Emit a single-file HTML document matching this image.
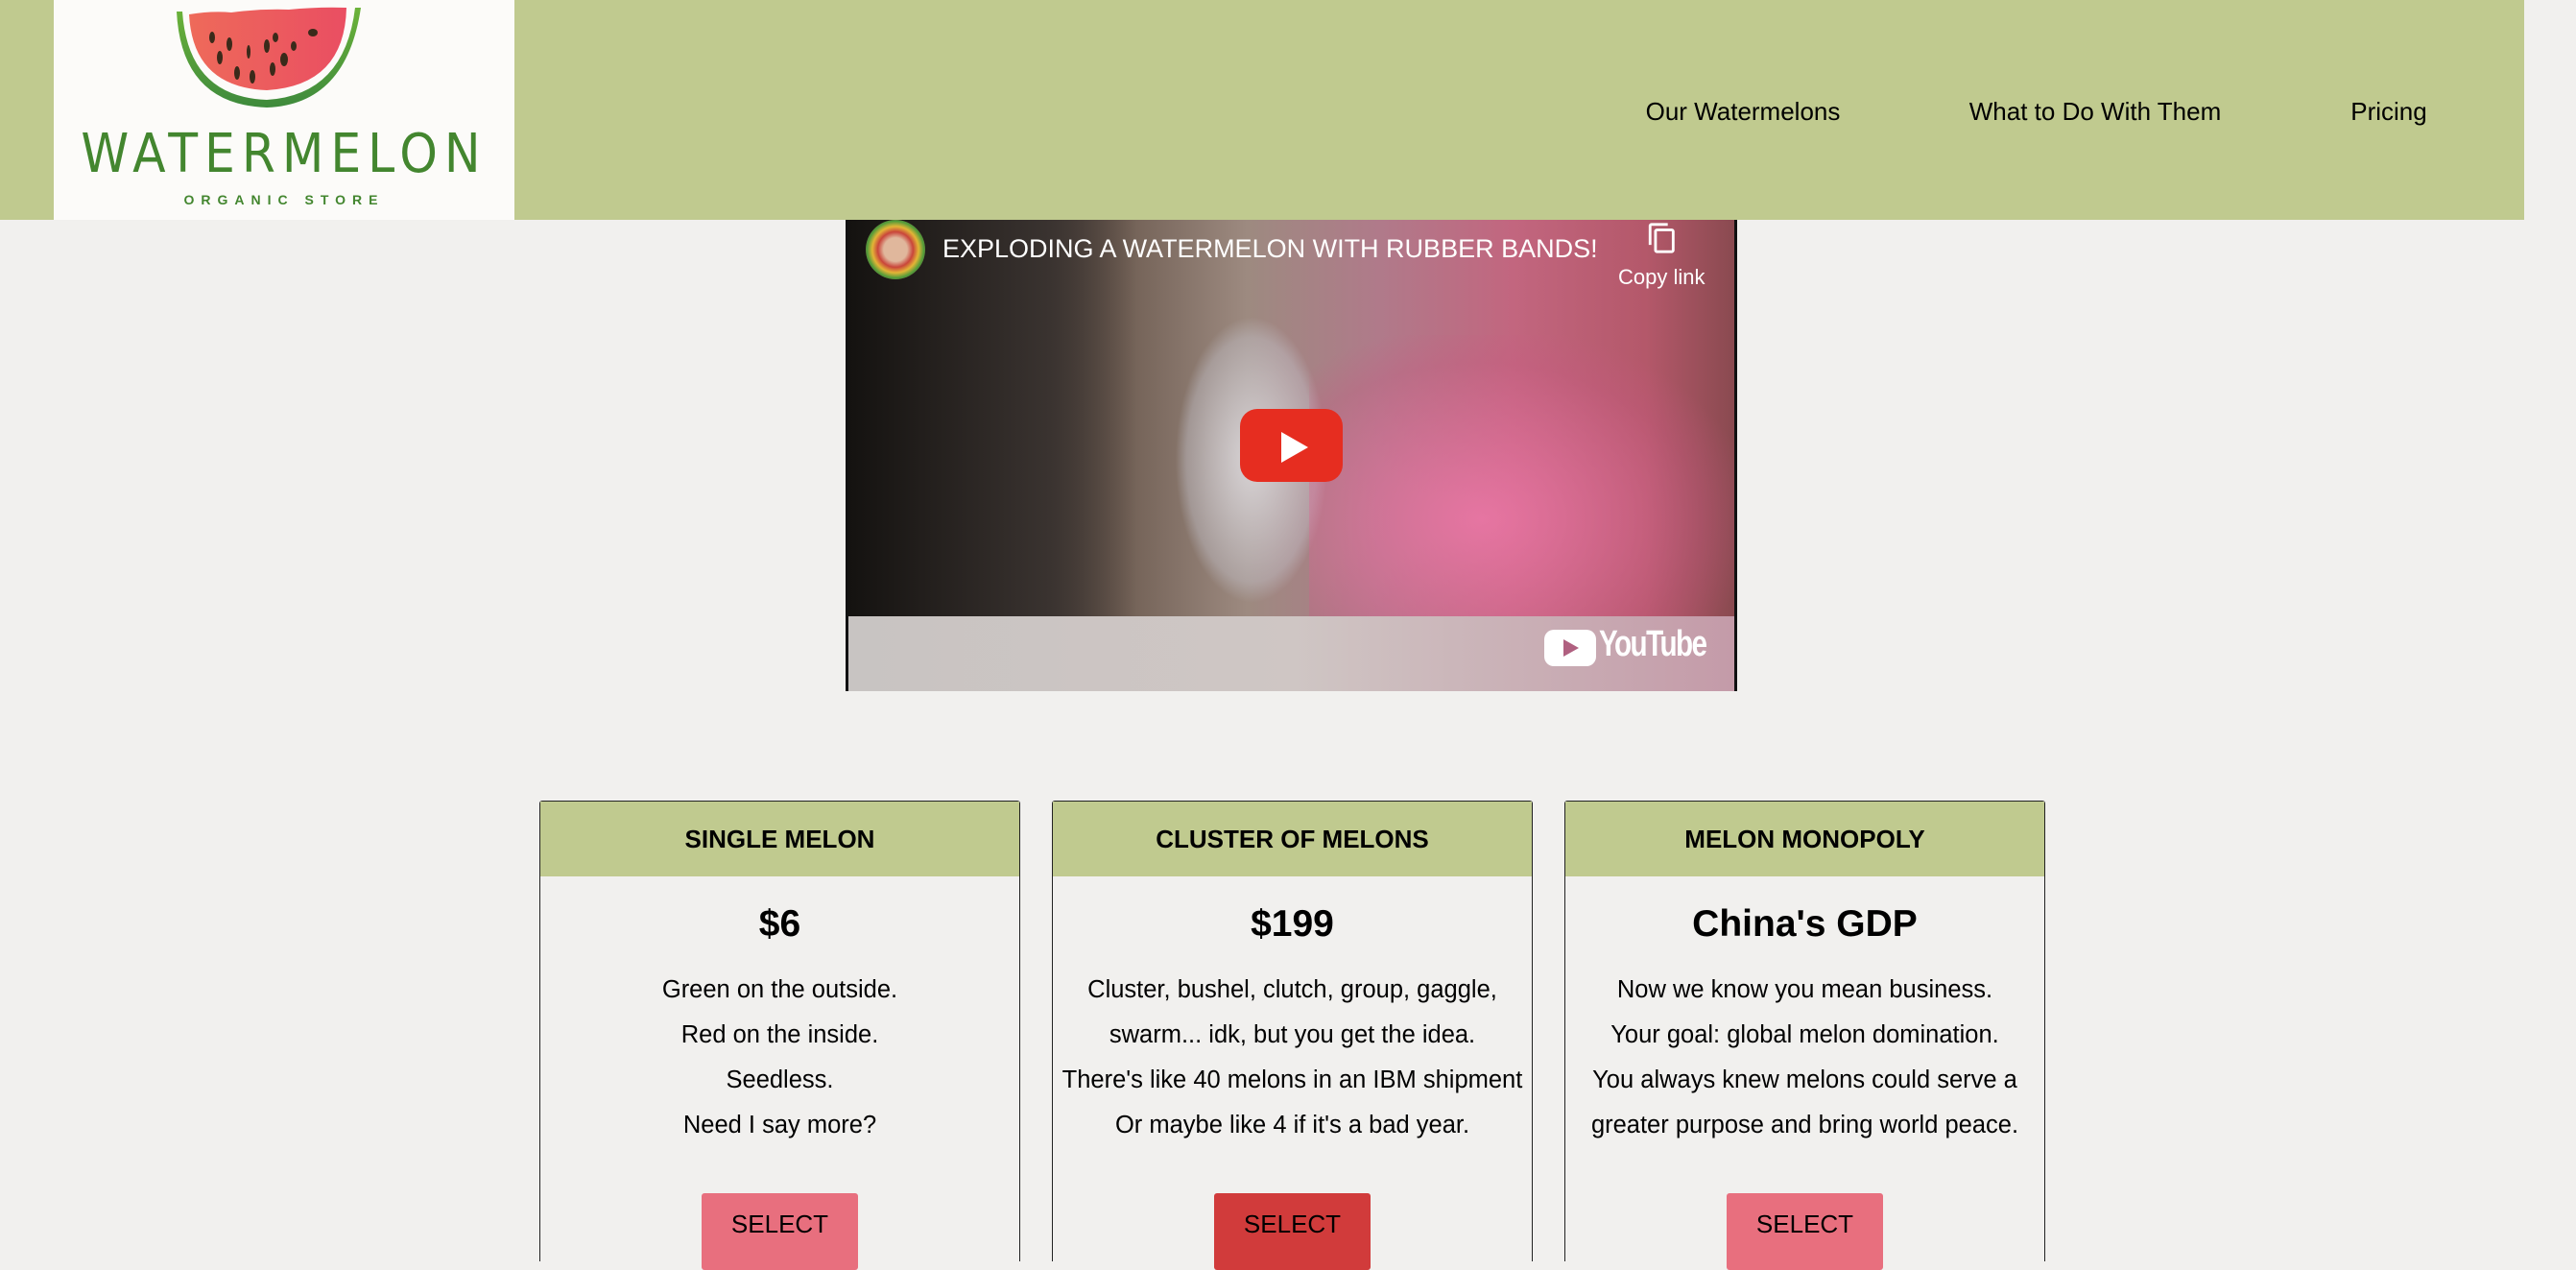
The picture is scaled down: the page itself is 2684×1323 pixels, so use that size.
<!DOCTYPE html>
<html><head><meta charset="utf-8"><style>
*{margin:0;padding:0;box-sizing:border-box}
body{width:2684px;height:1302px;background:#f1f0ee;position:relative;overflow:hidden;font-family:"Liberation Sans",sans-serif;color:#000}
.hdr{position:absolute;left:0;top:0;width:2630px;height:229px;background:#c0ca8f}
.logo{position:absolute;left:56px;top:0;width:480px;height:229px;background:#fcfbf9}
.wm{position:absolute;left:0;width:480px;text-align:center;color:#43862f;white-space:nowrap}
.nav{position:absolute;top:101px;font-size:26px;transform:translateX(-50%);white-space:nowrap}
.video{position:absolute;left:881px;top:229px;width:929px;height:491px;overflow:hidden;
background:linear-gradient(90deg,#1c1816 0%,#3a312d 15%,#6e5d52 30%,#9d8a80 45%,#b07a8a 60%,#c2667f 75%,#b4586a 90%,#8a4a50 100%);border-left:3px solid #111;border-right:3px solid #111}
.card{position:absolute;top:834px;width:501px;height:480px;border:1.5px solid #222;border-bottom:none;border-radius:3px 3px 0 0;text-align:center}
.card .h{height:78px;background:#c0ca8f;font-weight:bold;font-size:26px;line-height:78px}
.card .p{font-weight:bold;font-size:39px;margin-top:22px;height:56px;line-height:56px}
.card .d{font-size:25.5px;line-height:47px;margin-top:17px;white-space:nowrap}
.btn{position:absolute;left:168px;top:408px;width:163px;height:80px;border-radius:3px;font-size:26px;line-height:64px}
</style></head><body>
<div class="hdr">
 <div class="logo">
  <svg style="position:absolute;left:125px;top:4px" width="210" height="112" viewBox="0 0 210 112">
   <defs><linearGradient id="r" x1="0" x2="1"><stop offset="0" stop-color="#ee6a5a"/><stop offset="1" stop-color="#ea4e62"/></linearGradient>
   <linearGradient id="g" x1="0" x2="0" y1="0" y2="1"><stop offset="0" stop-color="#6cb33a"/><stop offset="1" stop-color="#3e8a3c"/></linearGradient></defs>
   <path d="M3 8 Q8 105 97 108 Q180 105 195 4 L189 4 Q178 95 97 100 Q15 97 9 8Z" fill="url(#g)"/>
   <path d="M16 11 Q40 7 60 9 Q90 5 120 6 Q150 3 180 4 Q178 85 97 90 Q20 87 16 11Z" fill="url(#r)"/>
   <g fill="#3a2a1a"><ellipse cx="40" cy="35" rx="3" ry="6"/><ellipse cx="58" cy="42" rx="3" ry="7"/><ellipse cx="48" cy="56" rx="3" ry="7"/><ellipse cx="78" cy="50" rx="2" ry="7"/><ellipse cx="97" cy="44" rx="3" ry="7"/><ellipse cx="106" cy="35" rx="3" ry="5"/><ellipse cx="115" cy="58" rx="4" ry="7"/><ellipse cx="125" cy="44" rx="3" ry="5"/><ellipse cx="145" cy="30" rx="5" ry="4"/><ellipse cx="66" cy="72" rx="3" ry="7"/><ellipse cx="82" cy="76" rx="3" ry="7"/><ellipse cx="103" cy="68" rx="3" ry="7"/></g>
  </svg>
  <div class="wm" style="top:128px;font-size:56px;letter-spacing:7px;font-family:'DejaVu Sans Condensed','Liberation Sans',sans-serif">WATERMELON</div>
  <div class="wm" style="top:200px;font-size:14px;letter-spacing:7px;font-weight:bold">ORGANIC STORE</div>
 </div>
 <div class="nav" style="left:1816px">Our Watermelons</div>
 <div class="nav" style="left:2183px">What to Do With Them</div>
 <div class="nav" style="left:2489px">Pricing</div>
</div>

<div class="video">
 <div style="position:absolute;left:0;top:0;width:300px;height:491px;background:linear-gradient(90deg,#141210,#3a3330 70%,transparent)"></div>
 <div style="position:absolute;left:340px;top:100px;width:160px;height:300px;background:radial-gradient(ellipse,#d8d4d6 0%,rgba(200,200,210,0.4) 60%,transparent 70%)"></div>
 <div style="position:absolute;left:480px;top:120px;width:449px;height:320px;background:radial-gradient(ellipse at 40% 60%,rgba(240,120,170,0.8),rgba(200,90,130,0.3) 60%,transparent 75%)"></div>
 <div style="position:absolute;left:0;top:413px;width:929px;height:78px;background:linear-gradient(90deg,#c8c4c2,#cfc6c4 50%,#c49aa8)"></div>
 <div style="position:absolute;left:18px;top:0;width:62px;height:62px;border-radius:50%;background:radial-gradient(circle,#e0b79c 28%,#c9453a 42%,#e3b536 55%,#4a9a3a 68%,#c9453a 80%)"></div>
 <div style="position:absolute;left:98px;top:15px;color:#fff;font-size:27px;white-space:nowrap">EXPLODING A WATERMELON WITH RUBBER BANDS!</div>
 <svg style="position:absolute;left:831px;top:2px" width="34" height="34" viewBox="0 0 24 24"><path d="M16 1H4c-1 0-2 1-2 2v14h2V3h12V1zm3 4H8c-1 0-2 1-2 2v14c0 1 1 2 2 2h11c1 0 2-1 2-2V7c0-1-1-2-2-2zm0 16H8V7h11v14z" fill="#fff"/></svg>
 <div style="position:absolute;left:802px;top:47px;color:#fff;font-size:22px">Copy link</div>
 <div style="position:absolute;left:408px;top:197px;width:107px;height:76px;background:#e62d20;border-radius:18px"></div>
 <div style="position:absolute;left:451px;top:221px;width:0;height:0;border-left:28px solid #fff;border-top:16px solid transparent;border-bottom:16px solid transparent"></div>
 <div style="position:absolute;left:725px;top:427px;width:54px;height:38px;background:#fff;border-radius:10px"></div>
 <div style="position:absolute;left:745px;top:437px;width:0;height:0;border-left:16px solid #b06080;border-top:9px solid transparent;border-bottom:9px solid transparent"></div>
 <div style="position:absolute;left:782px;top:421px;color:#fff;font-weight:bold;font-size:38px;letter-spacing:-2px;transform:scaleX(0.78);transform-origin:left">YouTube</div>
</div>

<div class="card" style="left:562px">
 <div class="h">SINGLE MELON</div>
 <div class="p">$6</div>
 <div class="d">Green on the outside.<br>Red on the inside.<br>Seedless.<br>Need I say more?</div>
 <div class="btn" style="background:#e86f7e">SELECT</div>
</div>
<div class="card" style="left:1096px">
 <div class="h">CLUSTER OF MELONS</div>
 <div class="p">$199</div>
 <div class="d">Cluster, bushel, clutch, group, gaggle,<br>swarm... idk, but you get the idea.<br>There's like 40 melons in an IBM shipment<br>Or maybe like 4 if it's a bad year.</div>
 <div class="btn" style="background:#d13b3b">SELECT</div>
</div>
<div class="card" style="left:1630px">
 <div class="h">MELON MONOPOLY</div>
 <div class="p">China's GDP</div>
 <div class="d">Now we know you mean business.<br>Your goal: global melon domination.<br>You always knew melons could serve a<br>greater purpose and bring world peace.</div>
 <div class="btn" style="background:#e86f7e">SELECT</div>
</div>
</body></html>
